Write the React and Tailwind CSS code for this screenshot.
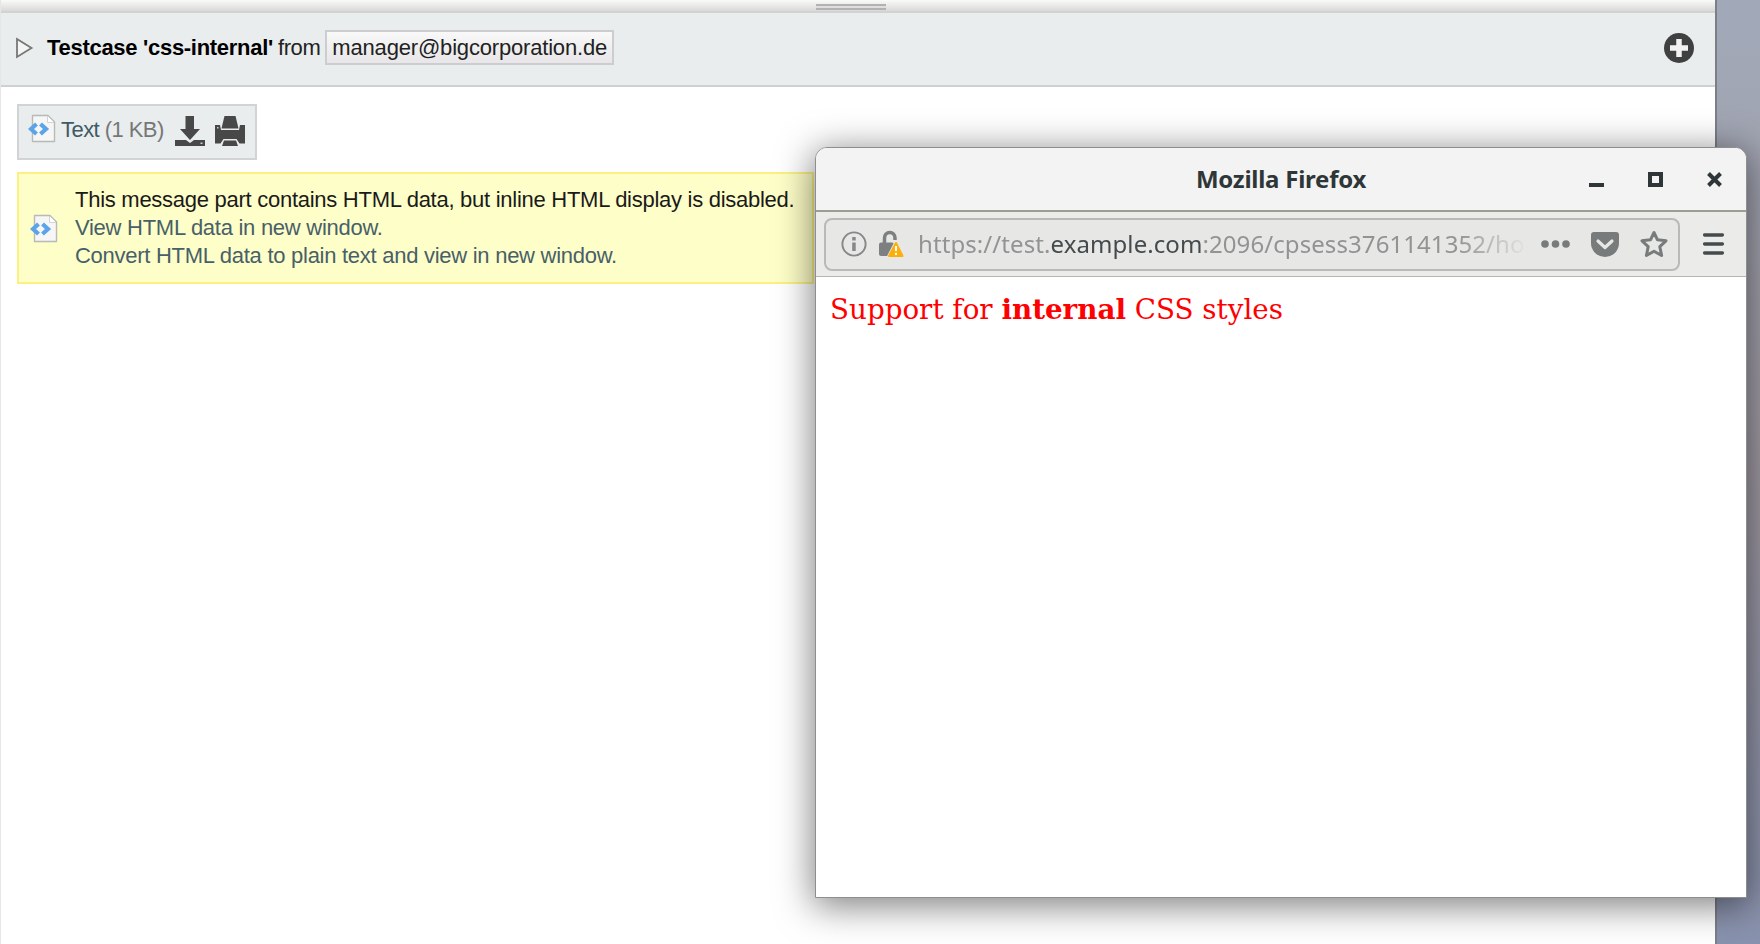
const HtmlIcon = ({ className = "" }) => (
  <svg width="29" height="29" viewBox="0 0 29 29" className={className}>
    <path d="M4.5 1.5H20L26.5 8V27.5H4.5Z" fill="#f6f6f7" stroke="#b9b9b6" strokeWidth="1.4" strokeLinejoin="round" />
    <path d="M19.5 2V8.5H26" fill="#fff" stroke="#d4d4d4" strokeWidth="1" />
    <path d="M8.500 10L3 15L8.500 20M12.500 10L18 15L12.500 20" fill="none" stroke="#5ba4e8" strokeWidth="4.200" />
  </svg>
);

const DownloadIcon = () => (
  <svg width="30" height="31" viewBox="0 0 30 31" fill="#484848">
    <path d="M10.500 0H19V13H25L15 24L5 13H10.500Z" />
    <path d="M0 24H11L15 27L19 24H30V30H0Z" />
    <rect x="25.500" y="26.500" width="2" height="1.500" fill="#ccc" />
  </svg>
);

const PrintIcon = () => (
  <svg width="30" height="31" viewBox="0 0 30 31" fill="#484848">
    <path d="M9.500 0H20.500L23.500 12.500H6.500Z" />
    <path d="M0 9H5L6 14H24L25 9H30V27.500H24.500L21.500 23H8.500L5.500 27.500H0Z" />
    <path d="M9 24.500H21L23 30H7Z" />
    <rect x="2" y="11" width="1.500" height="1.500" fill="#ccc" />
  </svg>
);

const Toolbar = () => (
  <div className="flex h-[65px] items-center border-b border-[#b5b5b2] bg-[#ebebe9] pl-[8px]">
    <div className="flex h-[53px] w-[856px] items-center rounded-[8px] border-2 border-[#b9b9b7] bg-[#e7e7e5] pl-[15px]">
      <svg width="26" height="26" viewBox="0 0 26 26" className="shrink-0">
        <circle cx="13" cy="13" r="11.600" fill="none" stroke="#858888" strokeWidth="1.900" />
        <rect x="11.200" y="6" width="3.500" height="3.500" fill="#858888" />
        <rect x="11.200" y="11.500" width="3.500" height="8.500" fill="#858888" />
      </svg>
      <svg width="26" height="28" viewBox="0 0 26 28" className="ml-[11px] shrink-0">
        <path d="M6.500 13V8A5.200 5.500 0 0 1 17 8V10" fill="none" stroke="#7d8080" strokeWidth="3.500" />
        <rect x="1" y="12.500" width="15" height="13.500" rx="2" fill="#7d8080" />
        <path d="M18 12.500L24.500 26H11Z" fill="#fcaf0a" stroke="#e7e7e5" strokeWidth="3.500" strokeLinejoin="round" />
        <path d="M18 13L24.500 26H11Z" fill="#fcaf0a" stroke="#fcaf0a" strokeWidth="2" strokeLinejoin="round" />
        <path d="M18 16V21M18 22.800V25" stroke="#fff" strokeWidth="2" />
      </svg>
      <div className="ml-[14px] w-[610px] shrink-0 overflow-hidden font-['Noto_Sans',sans-serif] text-[24px] leading-[40px] tracking-[0.08px] whitespace-nowrap text-[#929494] [mask-image:linear-gradient(to_right,black_540px,transparent_610px)]">
        https://test.<span className="text-[#444b4d]">example.com</span>:2096/cpsess3761141352/ho
      </div>
      <svg width="30" height="10" viewBox="0 0 30 10" fill="#787b7b" className="ml-[12px] shrink-0">
        <circle cx="5" cy="5" r="3.800" /><circle cx="15.500" cy="5" r="3.800" /><circle cx="26" cy="5" r="3.800" />
      </svg>
      <svg width="28" height="25" viewBox="0 0 28 25" className="ml-[21px] shrink-0">
        <path d="M3 0H25Q28 0 28 3V11A14 14 0 0 1 0 11V3Q0 0 3 0Z" fill="#787b7b" />
        <path d="M7 9L14 15.500L21 9" fill="none" stroke="#e7e7e5" strokeWidth="3.200" strokeLinecap="round" strokeLinejoin="round" />
      </svg>
      <svg width="28" height="28" viewBox="0 0 28 28" className="ml-[21px] shrink-0">
        <path d="M14 2.500L17.500 9.800L26 10.800L19.800 16.600L21.600 25.500L14 21.200L6.400 25.500L8.200 16.600L2 10.800L10.500 9.800Z" fill="none" stroke="#787b7b" strokeWidth="3" strokeLinejoin="round" />
      </svg>
    </div>
    <svg width="21" height="22" viewBox="0 0 21 22" className="ml-[23px]" stroke="#444b4d" strokeWidth="3.300" strokeLinecap="round">
      <path d="M1.600 2H19.400M1.600 11H19.400M1.600 20H19.400" />
    </svg>
  </div>
);

const PopupWindow = () => (
  <div className="absolute top-[147px] left-[815px] h-[751px] w-[932px] rounded-t-[12px] border border-[#8d8f8e] bg-white shadow-[0_6px_36px_2px_rgba(0,0,0,0.5)]">
    <div className="grid h-[64px] grid-cols-[1fr_auto_1fr] items-center rounded-t-[11px] border-b-2 border-[#9c9d94] bg-[#f3f3f3]">
      <span />
      <span className="font-['Noto_Sans',sans-serif] text-[24px] leading-[40px] font-bold tracking-[-0.25px] text-[#2e3638]">Mozilla Firefox</span>
      <div className="flex items-center justify-end gap-[44px] pr-[24px]">
        <svg width="15" height="15"><rect y="11" width="15" height="4" fill="#2e3638" /></svg>
        <svg width="15" height="15"><rect x="2" y="2" width="11" height="11" fill="none" stroke="#2e3638" strokeWidth="4" /></svg>
        <svg width="15" height="15"><path d="M1.500 1.500L13.500 13.500M13.500 1.500L1.500 13.500" stroke="#2e3638" strokeWidth="4" /></svg>
      </div>
    </div>
    <Toolbar />
    <p className="px-[14px] pt-[14px] font-['DejaVu_Serif',serif] text-[27.75px] leading-[38px] whitespace-nowrap text-[#ff0000]">
      Support for <b>internal</b> CSS styles
    </p>
  </div>
);

export default function App() {
  return (
    <div className="relative h-[944px] w-[1760px] overflow-hidden bg-linear-to-b from-[#a1a9b8] via-[#a09aa3] to-[#8992ae] font-['Liberation_Sans',Arial,sans-serif] text-[22px]">
      <main className="h-full w-[1717px] border-r-2 border-l border-r-[#7c7f87] border-l-[#e6e6e6] bg-white">
        <div className="flex h-[13px] justify-center border-b-2 border-[#d2d2d2] bg-linear-to-b from-[#fafaf8] to-[#d9d9d9] pt-1 pr-[14px]">
          <div className="h-[6px] w-[70px] border-y-2 border-[#b2b2b2] bg-[#dedede]" />
        </div>
        <header className="flex h-[74px] items-center border-b-2 border-[#cfd1d1] bg-[#e9eded] pr-[21px] pb-[3px] pl-[14px]">
          <svg width="19" height="22" viewBox="0 0 19 22"><path d="M2 2L16.500 11L2 20Z" fill="#f4f4f4" stroke="#777" strokeWidth="1.800" /></svg>
          <h1 className="ml-[13px] text-[22px] leading-[28px] font-bold tracking-[-0.29px] whitespace-nowrap text-black">Testcase 'css-internal'</h1>
          <span className="ml-[5px] tracking-[-0.4px] text-[#222]">from</span>
          <span className="ml-[5px] flex h-[35px] w-[289px] items-center border-2 border-[#cdcdcf] bg-linear-to-b from-[#f9f9f9] to-[#e8e6e8] pl-[5px] tracking-[-0.18px] whitespace-nowrap text-[#222]">manager@bigcorporation.de</span>
          <svg width="30" height="30" viewBox="0 0 30 30" className="ml-auto">
            <circle cx="15" cy="15" r="15" fill="#404040" />
            <path d="M15 6V24M6 15H24" stroke="#f2f2f2" strokeWidth="5.500" />
          </svg>
        </header>
        <section className="pt-[17px] pl-[16px]">
          <div className="flex h-[56px] w-[240px] items-center border-2 border-[#d2d4d4] bg-[#e9eded] pl-[9px]">
            <HtmlIcon className="-mt-[7px]" />
            <span className="mt-[-6px] ml-[4px] tracking-[-0.55px] whitespace-nowrap text-[#777]"><a className="text-[#3f5a65]">Text</a> (1 KB)</span>
            <div className="-mt-[2px] ml-auto flex gap-[10px] pr-[10px]"><DownloadIcon /><PrintIcon /></div>
          </div>
          <div className="mt-[12px] flex h-[112px] w-[797px] items-center border-2 border-[#fbf181] bg-[#fefec8] pl-[11px]">
            <HtmlIcon />
            <div className="ml-[16px] leading-[28px] tracking-[-0.27px] whitespace-nowrap text-[#486069]">
              <p className="text-[#1a1a1a]">This message part contains HTML data, but inline HTML display is disabled.</p>
              <p>View HTML data in new window.</p>
              <p>Convert HTML data to plain text and view in new window.</p>
            </div>
          </div>
        </section>
      </main>
      <PopupWindow />
    </div>
  );
}
